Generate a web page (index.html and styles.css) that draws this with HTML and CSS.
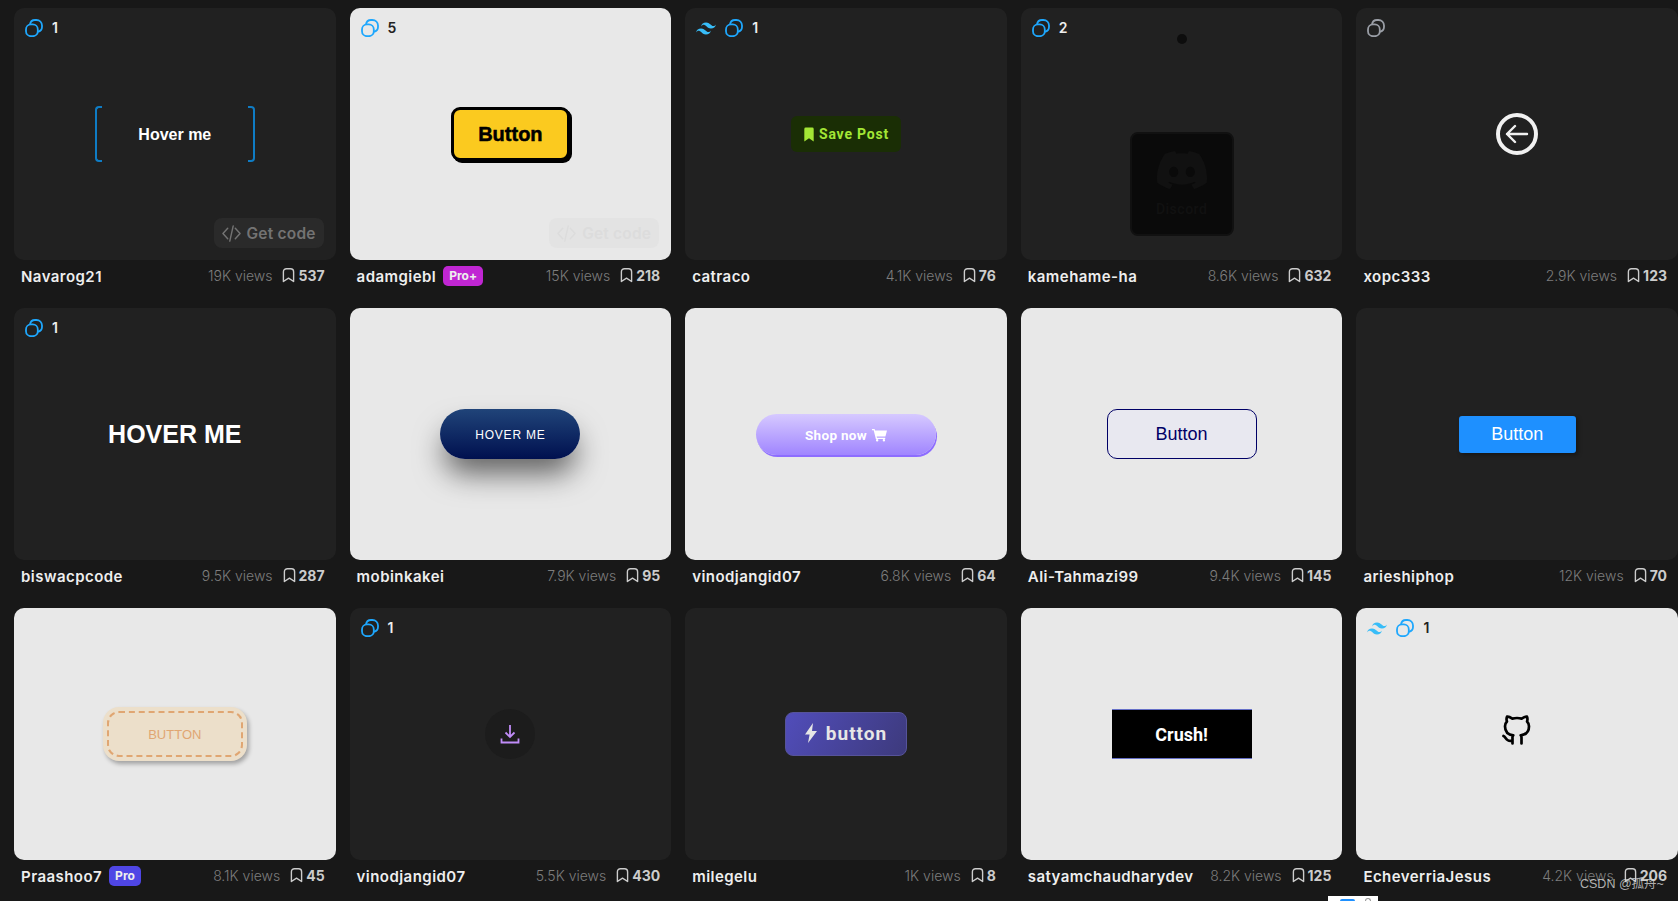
FILE: index.html
```html
<!DOCTYPE html>
<html lang="en">
<head>
    <meta charset="UTF-8">
    <title>Buttons</title>
    <link rel="stylesheet" href="styles.css">
</head>
<body>
    <svg class="sprite" width="0" height="0">
        <symbol id="i-layers" viewBox="0 0 18 18">
            <rect x="1" y="5.4" width="11.8" height="11.8" rx="5" fill="none" stroke="currentColor" stroke-width="1.8"/>
            <path d="M5 5.4C5.4 2.6 7.4 1 10 1h1.4C14.6 1 17 3.4 17 6.6V8c0 2.4-1.6 4.2-4.2 4.8" fill="none" stroke="currentColor" stroke-width="1.8"/>
        </symbol>
        <symbol id="i-wind" viewBox="0 0 54 33">
            <path fill="currentColor" d="M27 0c-7.2 0-11.7 3.6-13.5 10.8 2.7-3.6 5.85-4.95 9.45-4.05 2.054.513 3.522 2.004 5.147 3.653C30.744 13.09 33.808 16.2 40.5 16.2c7.2 0 11.7-3.6 13.5-10.8-2.7 3.6-5.85 4.95-9.45 4.05-2.054-.513-3.522-2.004-5.147-3.653C36.756 3.11 33.692 0 27 0zM13.5 16.2C6.3 16.2 1.8 19.8 0 27c2.7-3.6 5.85-4.95 9.45-4.05 2.054.514 3.522 2.004 5.147 3.653C17.244 29.29 20.308 32.4 27 32.4c7.2 0 11.7-3.6 13.5-10.8-2.7 3.6-5.85 4.95-9.45 4.05-2.054-.513-3.522-2.004-5.147-3.653C23.256 19.31 20.192 16.2 13.5 16.2z"/>
        </symbol>
        <symbol id="i-mark" viewBox="0 0 14 16">
            <path d="M1.5 15V4.5a3.3 3.3 0 0 1 3.3-3.3h4.4a3.3 3.3 0 0 1 3.3 3.3V15L7 11.4z" fill="none" stroke="currentColor" stroke-width="1.5" stroke-linejoin="round"/>
        </symbol>
        <symbol id="i-code" viewBox="0 0 20 20">
            <path d="M6 4.5 1 10l5 5.5M14 4.5l5 5.5-5 5.5M11.8 2 8.2 18" fill="none" stroke="currentColor" stroke-width="1.5" stroke-linecap="round" stroke-linejoin="round"/>
        </symbol>
    </svg>

    <main class="grid">
        <!-- row 1 -->
        <article class="item">
            <div class="card dark">
                <div class="badges"><svg class="layers"><use href="#i-layers"/></svg><span>1</span></div>
                <button class="bracket-btn"><i class="br-left"></i><span>Hover me</span><i class="br-right"></i></button>
                <div class="get-code"><svg><use href="#i-code"/></svg>Get code</div>
            </div>
            <div class="meta">
                <span class="author">Navarog21</span>
                <span class="stats"><span class="views">19K views</span><svg class="mark"><use href="#i-mark"/></svg><b>537</b></span>
            </div>
        </article>

        <article class="item">
            <div class="card light">
                <div class="badges"><svg class="layers"><use href="#i-layers"/></svg><span>5</span></div>
                <button class="yellow-btn">Button</button>
                <div class="get-code"><svg><use href="#i-code"/></svg>Get code</div>
            </div>
            <div class="meta">
                <span class="author">adamgiebl<em class="tag plus">Pro+</em></span>
                <span class="stats"><span class="views">15K views</span><svg class="mark"><use href="#i-mark"/></svg><b>218</b></span>
            </div>
        </article>

        <article class="item">
            <div class="card dark">
                <div class="badges"><svg class="wind"><use href="#i-wind"/></svg><svg class="layers"><use href="#i-layers"/></svg><span>1</span></div>
                <button class="save-btn">
                    <svg viewBox="0 0 12 16" width="12" height="15"><path fill="currentColor" d="M1 2A1.5 1.5 0 0 1 2.5.5h7A1.5 1.5 0 0 1 11 2v13.5L6 12l-5 3.5z"/></svg>
                    Save Post
                </button>
            </div>
            <div class="meta">
                <span class="author">catraco</span>
                <span class="stats"><span class="views">4.1K views</span><svg class="mark"><use href="#i-mark"/></svg><b>76</b></span>
            </div>
        </article>

        <article class="item">
            <div class="card dark discord-card">
                <div class="badges"><svg class="layers"><use href="#i-layers"/></svg><span>2</span></div>
                <div class="discord-dot"></div>
                <div class="discord-box">
                    <svg viewBox="0 0 24 24" width="50" height="50"><path fill="currentColor" d="M20.317 4.3698a19.7913 19.7913 0 00-4.8851-1.5152.0741.0741 0 00-.0785.0371c-.211.3753-.4447.8648-.6083 1.2495-1.8447-.2762-3.68-.2762-5.4868 0-.1636-.3933-.4058-.8742-.6177-1.2495a.077.077 0 00-.0785-.037 19.7363 19.7363 0 00-4.8852 1.515.0699.0699 0 00-.0321.0277C.5334 9.0458-.319 13.5799.0992 18.0578a.0824.0824 0 00.0312.0561c2.0528 1.5076 4.0413 2.4228 5.9929 3.0294a.0777.0777 0 00.0842-.0276c.4616-.6304.8731-1.2952 1.226-1.9942a.076.076 0 00-.0416-.1057c-.6528-.2476-1.2743-.5495-1.8722-.8923a.077.077 0 01-.0076-.1277c.1258-.0943.2517-.1923.3718-.2914a.0743.0743 0 01.0776-.0105c3.9278 1.7933 8.18 1.7933 12.0614 0a.0739.0739 0 01.0785.0095c.1202.099.246.1981.3728.2924a.077.077 0 01-.0066.1276 12.2986 12.2986 0 01-1.873.8914.0766.0766 0 00-.0407.1067c.3604.698.7719 1.3628 1.225 1.9932a.076.076 0 00.0842.0286c1.961-.6067 3.9495-1.5219 6.0023-3.0294a.077.077 0 00.0313-.0552c.5004-5.177-.8382-9.6739-3.5485-13.6604a.061.061 0 00-.0312-.0286zM8.02 15.3312c-1.1825 0-2.1569-1.0857-2.1569-2.419 0-1.3332.9555-2.4189 2.157-2.4189 1.2108 0 2.1757 1.0952 2.1568 2.419 0 1.3332-.9555 2.4189-2.1569 2.4189zm7.9748 0c-1.1825 0-2.1569-1.0857-2.1569-2.419 0-1.3332.9554-2.4189 2.1569-2.4189 1.2108 0 2.1757 1.0952 2.1568 2.419 0 1.3332-.946 2.4189-2.1568 2.4189Z"/></svg>
                    <span>Discord</span>
                </div>
            </div>
            <div class="meta">
                <span class="author">kamehame-ha</span>
                <span class="stats"><span class="views">8.6K views</span><svg class="mark"><use href="#i-mark"/></svg><b>632</b></span>
            </div>
        </article>

        <article class="item">
            <div class="card dark">
                <div class="badges"><svg class="layers grey"><use href="#i-layers"/></svg></div>
                <svg class="back-arrow" viewBox="0 0 42 42" width="42" height="42">
                    <circle cx="21" cy="21" r="19" fill="none" stroke="#f1f1f1" stroke-width="4"/>
                    <path d="M31 21H11M19 13l-8 8 8 8" fill="none" stroke="#f1f1f1" stroke-width="2.4" stroke-linecap="round" stroke-linejoin="round"/>
                </svg>
            </div>
            <div class="meta">
                <span class="author">xopc333</span>
                <span class="stats"><span class="views">2.9K views</span><svg class="mark"><use href="#i-mark"/></svg><b>123</b></span>
            </div>
        </article>

        <!-- row 2 -->
        <article class="item">
            <div class="card dark">
                <div class="badges"><svg class="layers"><use href="#i-layers"/></svg><span>1</span></div>
                <div class="big-text">HOVER ME</div>
            </div>
            <div class="meta">
                <span class="author">biswacpcode</span>
                <span class="stats"><span class="views">9.5K views</span><svg class="mark"><use href="#i-mark"/></svg><b>287</b></span>
            </div>
        </article>

        <article class="item">
            <div class="card light">
                <button class="navy-btn">HOVER ME</button>
            </div>
            <div class="meta">
                <span class="author">mobinkakei</span>
                <span class="stats"><span class="views">7.9K views</span><svg class="mark"><use href="#i-mark"/></svg><b>95</b></span>
            </div>
        </article>

        <article class="item">
            <div class="card light">
                <button class="shop-btn">Shop now
                    <svg viewBox="0 0 16 14" width="15" height="14"><path fill="currentColor" d="M0 .6h2.800l.5 1.600H16l-1.700 6.400H5l.3 1.200h8.800v1.400H4.100L1.800 2H0zM5.500 11.300a1.300 1.300 0 1 1 0 2.600 1.300 1.300 0 0 1 0-2.600zm7.200 0a1.300 1.300 0 1 1 0 2.600 1.300 1.300 0 0 1 0-2.600z"/></svg>
                </button>
            </div>
            <div class="meta">
                <span class="author">vinodjangid07</span>
                <span class="stats"><span class="views">6.8K views</span><svg class="mark"><use href="#i-mark"/></svg><b>64</b></span>
            </div>
        </article>

        <article class="item">
            <div class="card light">
                <button class="outline-btn">Button</button>
            </div>
            <div class="meta">
                <span class="author">Ali-Tahmazi99</span>
                <span class="stats"><span class="views">9.4K views</span><svg class="mark"><use href="#i-mark"/></svg><b>145</b></span>
            </div>
        </article>

        <article class="item">
            <div class="card dark">
                <button class="blue-btn">Button</button>
            </div>
            <div class="meta">
                <span class="author">arieshiphop</span>
                <span class="stats"><span class="views">12K views</span><svg class="mark"><use href="#i-mark"/></svg><b>70</b></span>
            </div>
        </article>

        <!-- row 3 -->
        <article class="item">
            <div class="card light">
                <button class="stitch-btn"><span>BUTTON</span></button>
            </div>
            <div class="meta">
                <span class="author">Praashoo7<em class="tag pro">Pro</em></span>
                <span class="stats"><span class="views">8.1K views</span><svg class="mark"><use href="#i-mark"/></svg><b>45</b></span>
            </div>
        </article>

        <article class="item">
            <div class="card dark">
                <div class="badges"><svg class="layers"><use href="#i-layers"/></svg><span>1</span></div>
                <button class="download-btn">
                    <svg viewBox="0 0 20 20" width="20" height="20"><path d="M10 1v12M5.5 8.500 10 13l4.500-4.500M1.500 14.500v4h17v-4" fill="none" stroke="currentColor" stroke-width="1.8"/></svg>
                </button>
            </div>
            <div class="meta">
                <span class="author">vinodjangid07</span>
                <span class="stats"><span class="views">5.5K views</span><svg class="mark"><use href="#i-mark"/></svg><b>430</b></span>
            </div>
        </article>

        <article class="item">
            <div class="card dark">
                <button class="bolt-btn">
                    <svg viewBox="0 0 12 20" width="12" height="20"><path fill="currentColor" d="M8 0 0 11.500h4.600L3 20l9-12H7z"/></svg>
                    button
                </button>
            </div>
            <div class="meta">
                <span class="author">milegelu</span>
                <span class="stats"><span class="views">1K views</span><svg class="mark"><use href="#i-mark"/></svg><b>8</b></span>
            </div>
        </article>

        <article class="item">
            <div class="card light">
                <button class="crush-btn">Crush!</button>
            </div>
            <div class="meta">
                <span class="author">satyamchaudharydev</span>
                <span class="stats"><span class="views">8.2K views</span><svg class="mark"><use href="#i-mark"/></svg><b>125</b></span>
            </div>
        </article>

        <article class="item">
            <div class="card light">
                <div class="badges"><svg class="wind"><use href="#i-wind"/></svg><svg class="layers"><use href="#i-layers"/></svg><span>1</span></div>
                <svg class="github" viewBox="0 0 24 24" width="36" height="36"><path d="M9 19c-4.300 1.400-4.300-2.500-6-3m12 5v-3.500c0-1 .1-1.400-.5-2 2.800-.3 5.500-1.400 5.500-6a4.600 4.600 0 0 0-1.300-3.200 4.200 4.200 0 0 0-.1-3.200s-1.100-.3-3.500 1.300a12.300 12.300 0 0 0-6.200 0C6.500 2.800 5.400 3.100 5.400 3.100a4.200 4.200 0 0 0-.1 3.200A4.600 4.600 0 0 0 4 9.500c0 4.600 2.700 5.700 5.500 6-.6.600-.6 1.200-.5 2V21" fill="none" stroke="#000" stroke-width="1.8" stroke-linecap="round" stroke-linejoin="round"/></svg>
            </div>
            <div class="meta">
                <span class="author">EcheverriaJesus</span>
                <span class="stats"><span class="views">4.2K views</span><svg class="mark"><use href="#i-mark"/></svg><b>206</b></span>
            </div>
        </article>
    </main>

    <div class="watermark">CSDN @孤舟~</div>
    <div class="peek"><i class="peek-blue"></i><i class="peek-grey"></i></div>
</body>
</html>
```

FILE: styles.css
```css
* {
    box-sizing: border-box;
}
html, body {
    height: 901px;
    overflow: hidden;
}
body {
    margin: 0;
    background: #181818;
    font-family: Inter, "Noto Sans", sans-serif;
    color: #eee;
}
button {
    font-family: "Liberation Sans", Arial, sans-serif;
    border: none;
    padding: 0;
    cursor: pointer;
}
.sprite {
    position: absolute;
}
.grid {
    display: grid;
    grid-template-columns: repeat(5, 1fr);
    grid-auto-rows: 284px;
    column-gap: 14px;
    row-gap: 16px;
    padding: 8px 0 0 14px;
}
.card {
    position: relative;
    height: 252px;
    border-radius: 10px;
    display: flex;
    align-items: center;
    justify-content: center;
}
.card.dark {
    background: #212121;
}
.card.light {
    background: #e8e8e8;
}

/* top left badges */
.badges {
    position: absolute;
    top: 11px;
    left: 11px;
    display: flex;
    align-items: center;
    gap: 9px;
    font-size: 14px;
    font-weight: 600;
    height: 18px;
}
.badges span {
    margin-top: -2px;
}
.light .badges {
    color: #222;
}
.layers {
    width: 18px;
    height: 18px;
    color: #1ea7fd;
}
.layers.grey {
    color: #9a9ea6;
}
.wind {
    width: 20px;
    height: 13px;
    color: #38bdf8;
}

/* get code pill */
.get-code {
    position: absolute;
    right: 12px;
    bottom: 12px;
    height: 30px;
    width: 110px;
    border-radius: 8px;
    background: #2a2a2a;
    color: #737373;
    display: flex;
    align-items: center;
    justify-content: center;
    gap: 6px;
    font-size: 15.5px;
    font-weight: 600;
    letter-spacing: 0.2px;
}
.get-code svg {
    width: 19px;
    height: 19px;
}
.light .get-code {
    background: #e3e3e3;
    color: #dcdcdc;
}

/* footer of each card */
.meta {
    height: 32px;
    display: flex;
    align-items: center;
    justify-content: space-between;
    padding: 0 11px 0 7px;
}
.author {
    display: flex;
    align-items: center;
    font-size: 15px;
    font-weight: 600;
    letter-spacing: 0.45px;
    color: #eee;
}
.tag {
    font-style: normal;
    font-size: 12px;
    font-weight: 700;
    letter-spacing: 0;
    color: #eee;
    height: 20px;
    line-height: 20px;
    padding: 0 6px;
    border-radius: 5px;
    margin-left: 7px;
}
.tag.plus {
    background: #c026d3;
}
.tag.pro {
    background: #4f46e5;
}
.stats {
    display: flex;
    align-items: center;
    font-size: 14px;
    padding-bottom: 2px;
}
.views {
    color: #7d7d7d;
    font-weight: 300;
    margin-right: 10px;
}
.mark {
    width: 13px;
    height: 16px;
    color: #ccc;
    margin-right: 3px;
}
.stats b {
    font-weight: 700;
    color: #ccc;
}

/* the buttons */
.bracket-btn {
    width: 160px;
    height: 56px;
    background: none;
    color: #fff;
    font-size: 16px;
    font-weight: 700;
    display: flex;
    align-items: center;
    justify-content: space-between;
}
.bracket-btn span {
    padding-top: 2px;
}
.br-left, .br-right {
    width: 7px;
    height: 56px;
    border: 2.500px solid #0f7cc4;
}
.br-left {
    border-right: none;
    border-radius: 4px 0 0 4px;
}
.br-right {
    border-left: none;
    border-radius: 0 4px 4px 0;
}
.yellow-btn {
    width: 119px;
    height: 54px;
    margin: 0 0 1px 0;
    background: #fbca1f;
    border: 3px solid #000;
    border-radius: 9px;
    box-shadow: 2px 2px 0 #000;
    color: #000;
    font-size: 20px;
    font-weight: 700;
    -webkit-text-stroke: 0.5px #000;
    padding-top: 2px;
}
.save-btn {
    width: 110px;
    height: 36px;
    background: #1a2e05;
    border-radius: 6px;
    color: #a3e635;
    font-family: Roboto, sans-serif;
    font-size: 14px;
    font-weight: 700;
    letter-spacing: 0.8px;
    display: flex;
    align-items: center;
    justify-content: center;
    gap: 4px;
}
.discord-card {
    flex-direction: column;
    justify-content: flex-start;
    padding-top: 26px;
}
.discord-dot {
    width: 10px;
    height: 10px;
    border-radius: 50%;
    background: #0d0d0d;
}
.discord-box {
    margin-top: 88px;
    width: 104px;
    height: 104px;
    background: #0a0a0a;
    border: 2px solid #111;
    border-radius: 8px;
    color: #111;
    display: flex;
    flex-direction: column;
    align-items: center;
    padding-top: 11px;
    font-family: Roboto, sans-serif;
    font-size: 14px;
    font-weight: 500;
    letter-spacing: 0.5px;
}
.discord-box span {
    margin-top: 6px;
}
.big-text {
    font-family: "Liberation Sans", Arial, sans-serif;
    font-size: 25px;
    font-weight: 700;
    color: #fff;
}
.navy-btn {
    width: 140px;
    height: 50px;
    border-radius: 25px;
    background: linear-gradient(#204479, #00104f);
    color: #fff;
    font-size: 12px;
    letter-spacing: 0.8px;
    padding-top: 1px;
    box-shadow: 0 18px 30px -4px rgba(0, 0, 0, 0.6);
}
.shop-btn {
    width: 180px;
    height: 41px;
    margin-top: 1px;
    border-radius: 21px;
    background: linear-gradient(#d6c9ff, #a085ff);
    box-shadow: 1px 2px 0 #8d6cff;
    color: #fff;
    font-family: Roboto, sans-serif;
    font-size: 13.500px;
    font-weight: 700;
    letter-spacing: 0.3px;
    display: flex;
    align-items: center;
    justify-content: center;
    gap: 5px;
}
.outline-btn {
    width: 150px;
    height: 50px;
    background: #e8e8f0;
    border: 1px solid #000066;
    border-radius: 10px;
    color: #000066;
    font-size: 18px;
}
.blue-btn {
    width: 117px;
    height: 37px;
    background: #1e90ff;
    border-radius: 3px;
    box-shadow: 2px 2px 4px rgba(0, 0, 0, 0.35);
    color: #fff;
    font-size: 18px;
}
.stitch-btn {
    width: 144px;
    height: 54px;
    padding: 4px;
    background: #ecdfca;
    border-radius: 16px;
    box-shadow: 2px 3px 4px rgba(0, 0, 0, 0.3);
    color: #e0a672;
    font-size: 13px;
}
.stitch-btn span {
    display: flex;
    align-items: center;
    justify-content: center;
    height: 100%;
    border: 2px dashed #e0a672;
    border-radius: 12px;
}
.download-btn {
    width: 50px;
    height: 50px;
    border-radius: 50%;
    background: #1c1c1c;
    color: #c08cf8;
    display: flex;
    align-items: center;
    justify-content: center;
}
.bolt-btn {
    width: 122px;
    height: 44px;
    border: 1px solid #56539a;
    border-radius: 8px;
    background: linear-gradient(120deg, #514dba, #3d3a7c);
    color: #e6e6e6;
    font-family: Roboto, sans-serif;
    font-size: 19px;
    font-weight: 700;
    letter-spacing: 1px;
    display: flex;
    align-items: center;
    justify-content: center;
    gap: 9px;
    padding-bottom: 2px;
}
.crush-btn {
    width: 140px;
    height: 50px;
    background: #000;
    border-top: 1px solid #6670c8;
    border-bottom: 1px solid #6670c8;
    color: #fff;
    font-family: Roboto, sans-serif;
    font-size: 18px;
    font-weight: 700;
}
.github {
    margin-top: -8px;
}

/* things on top of the page */
.watermark {
    position: absolute;
    left: 1580px;
    top: 877px;
    font-family: "Liberation Sans", "Noto Sans CJK SC", sans-serif;
    font-size: 12.500px;
    line-height: 14px;
    color: rgba(215, 215, 215, 0.8);
}
.peek {
    position: absolute;
    left: 1328px;
    top: 896px;
    width: 50px;
    height: 5px;
    background: #fff;
}
.peek-blue {
    position: absolute;
    left: 12px;
    top: 3px;
    width: 15px;
    height: 2px;
    border-radius: 2px 2px 0 0;
    background: #1e90ff;
}
.peek-grey {
    position: absolute;
    left: 37px;
    top: 2px;
    width: 6px;
    height: 3px;
    border: 1px solid #999;
    border-bottom: none;
    border-radius: 3px 3px 0 0;
}
```
